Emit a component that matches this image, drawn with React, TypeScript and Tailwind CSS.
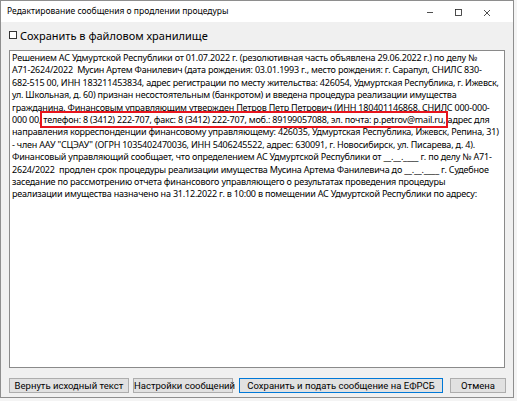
import React from "react";

const font = { fontFamily: '"Noto Sans", "Open Sans", sans-serif' };
const fontBtn = { fontFamily: 'Roboto, "Noto Sans", sans-serif' };

function Line({ children }: { children: React.ReactNode }) {
  return <div className="whitespace-pre h-[12.4px] leading-[12.4px]">{children}</div>;
}

export default function App() {
  return (
    <div className="w-[517px] h-[401px] bg-[#f4f4f4] overflow-hidden" style={font}>
      <div className="w-[514px] h-[398px] border border-[#8e8e8e] bg-[#f0f0f0] flex flex-col">
        {/* title bar */}
        <div className="h-[21px] bg-white flex items-center shrink-0">
          <div className="pl-[6px] text-[8.5px] text-black">Редактирование сообщения о продлении процедуры</div>
          <div className="ml-auto flex items-center h-full">
            <svg width="30" height="21" viewBox="0 0 30 21" className="block">
              <line x1="10" y1="11.5" x2="16" y2="11.5" stroke="#222" strokeWidth="0.8" />
            </svg>
            <svg width="30" height="21" viewBox="0 0 30 21" className="block">
              <rect x="8.5" y="8.5" width="6" height="6" fill="none" stroke="#222" strokeWidth="0.8" />
            </svg>
            <svg width="30" height="21" viewBox="0 0 30 21" className="block mr-[6px]">
              <path d="M7 9 L13 15 M13 9 L7 15" stroke="#222" strokeWidth="0.8" />
            </svg>
          </div>
        </div>
        {/* checkbox row */}
        <div className="flex items-center h-[14px] mt-[6px] pl-[8px] shrink-0">
          <div className="w-[8px] h-[8px] border border-[#333] bg-white" />
          <div className="ml-[3px] text-[11px] text-black leading-none">Сохранить в файловом хранилище</div>
        </div>
        {/* textarea */}
        <div className="mt-[8px] mx-[8px] h-[318px] border border-[#8a8a8a] bg-white pl-[2px] pt-[1px] text-[9px] tracking-[-0.2px] text-black shrink-0 overflow-hidden">
          <Line>Решением АС Удмуртской Республики от 01.07.2022 г. (резолютивная часть объявлена 29.06.2022 г.) по делу №</Line>
          <Line>А71-2624/2022  Мусин Артем Фанилевич (дата рождения: 03.01.1993 г., место рождения: г. Сарапул, СНИЛС 830-</Line>
          <Line>682-515 00, ИНН 183211453834, адрес регистрации по месту жительства: 426054, Удмуртская Республика, г. Ижевск,</Line>
          <Line>ул. Школьная, д. 60) признан несостоятельным (банкротом) и введена процедура реализации имущества</Line>
          <Line>гражданина. Финансовым управляющим утвержден Петров Петр Петрович (ИНН 180401146868, СНИЛС 000-000-</Line>
          <Line>
            000 00,{" "}
            <span className="relative">
              телефон: 8 (3412) 222-707, факс: 8 (3412) 222-707, моб.: 89199057088, эл. почта: p.petrov@mail.ru,
              <span className="absolute left-[-3px] right-[-3px] top-[-2px] bottom-[-2px] border-2 border-[#e8141c]" />
            </span>{" "}
            адрес для
          </Line>
          <Line>направления корреспонденции финансовому управляющему: 426035, Удмуртская Республика, Ижевск, Репина, 31)</Line>
          <Line>- член ААУ "СЦЭАУ" (ОГРН 1035402470036, ИНН 5406245522, адрес: 630091, г. Новосибирск, ул. Писарева, д. 4).</Line>
          <Line>Финансовый управляющий сообщает, что определением АС Удмуртской Республики от __.__.____ г. по делу № А71-</Line>
          <Line>2624/2022  продлен срок процедуры реализации имущества Мусина Артема Фанилевича до __.__.____ г. Судебное</Line>
          <Line>заседание по рассмотрению отчета финансового управляющего о результатах проведения процедуры</Line>
          <Line>реализации имущества назначено на 31.12.2022 г. в 10:00 в помещении АС Удмуртской Республики по адресу:</Line>
        </div>
        {/* buttons */}
        <div className="flex mt-[10px] pl-[8px] h-[15px] text-[9.5px] text-black shrink-0 whitespace-nowrap" style={fontBtn}>
          <button className="w-[120px] h-full border border-[#adadad] bg-[#e1e1e1] leading-none whitespace-nowrap">Вернуть исходный текст</button>
          <button className="ml-[4px] w-[100px] h-full border border-[#adadad] bg-[#e1e1e1] leading-none whitespace-nowrap">Настройки сообщений</button>
          <button className="ml-[6px] w-[204px] h-full border border-[#0078d7] bg-[#e1e1e1] leading-none whitespace-nowrap">Сохранить и подать сообщение на ЕФРСБ</button>
          <button className="ml-[7px] w-[56px] h-full border border-[#adadad] bg-[#e1e1e1] leading-none whitespace-nowrap">Отмена</button>
        </div>
      </div>
    </div>
  );
}
